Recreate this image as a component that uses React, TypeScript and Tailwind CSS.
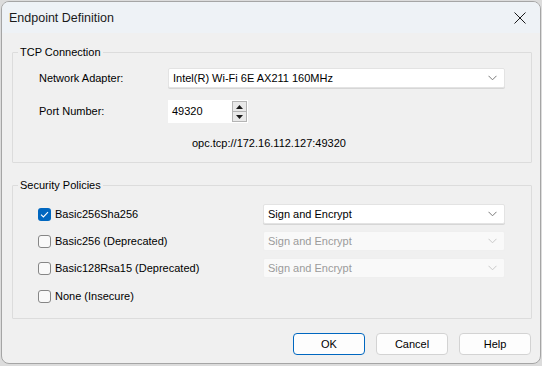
import React from "react";

const font = { fontFamily: '"Liberation Sans", Arial, sans-serif' };

// small chevron used by the combo boxes
function Chevron({ disabled }: { disabled?: boolean }) {
  return (
    <svg width="9" height="6" viewBox="0 0 9 6" className="shrink-0">
      <path d="M0.5 0.8 L4.5 4.8 L8.5 0.8" fill="none" stroke={disabled ? "#c9c9c9" : "#7a7a7a"} strokeWidth="1" />
    </svg>
  );
}

function Combo({ value, width, disabled }: { value: string; width: string; disabled?: boolean }) {
  return (
    <div
      className={`${width} h-[20px] flex items-center justify-between pl-[4px] pr-[7px] rounded-[2px] border ${
        disabled ? "bg-[#f9f9f9] border-[#efefef] text-[#9b9b9b]" : "bg-white border-[#e3e3e3] text-black shadow-[0_1px_0_#d6d6d6]"
      }`}
    >
      <span>{value}</span>
      <Chevron disabled={disabled} />
    </div>
  );
}

function Check({ checked, label }: { checked?: boolean; label: string }) {
  return (
    <div className="flex items-center gap-[4px]">
      {checked ? (
        <div className="w-[13px] h-[13px] rounded-[3px] bg-[#0067c0] flex items-center justify-center">
          <svg width="9" height="7" viewBox="0 0 9 7">
            <path d="M1 3.6 L3.4 6 L8 1.2" fill="none" stroke="#ffffff" strokeWidth="1.1" />
          </svg>
        </div>
      ) : (
        <div className="w-[13px] h-[13px] rounded-[3px] border border-[#868686] bg-[#f9f9f9]" />
      )}
      <span>{label}</span>
    </div>
  );
}

function Button({ label, primary }: { label: string; primary?: boolean }) {
  return (
    <button
      className={`w-[72px] h-[22px] rounded-[4px] bg-[#fdfdfd] text-black ${
        primary ? "border border-[#0067c0]" : "border border-[#d3d3d3]"
      }`}
    >
      {label}
    </button>
  );
}

export default function App() {
  return (
    <div className="w-[542px] h-[366px] bg-[#dcdcdc] pt-px pl-px text-[11px] text-black" style={font}>
      <div className="w-[540px] h-[363px] rounded-[8px] border border-[#a5a5a5] bg-[#f0f0f0] overflow-hidden flex flex-col">
        {/* title bar */}
        <div className="h-[31px] bg-[#eef2f6] flex items-center justify-between pl-[7px] pr-[14px] shrink-0">
          <span className="text-[12.5px] text-[#1a1a1a] pt-[2px]">Endpoint Definition</span>
          <svg width="12" height="12" viewBox="0 0 12 12">
            <path d="M0.5 0.5 L11.5 11.5 M11.5 0.5 L0.5 11.5" stroke="#1a1a1a" strokeWidth="1" />
          </svg>
        </div>

        {/* TCP Connection */}
        <fieldset className="mt-[12px] ml-[10px] w-[520px] h-[118px] border border-[#dcdcdc] rounded-[1px]">
          <legend className="ml-[5px] px-[2px] leading-[14px]">TCP Connection</legend>
          <div className="pt-[9px] pl-[26px] flex flex-col">
            <div className="flex items-center h-[20px]">
              <span className="w-[129px]">Network Adapter:</span>
              <Combo value="Intel(R) Wi-Fi 6E AX211 160MHz" width="w-[337px]" />
            </div>
            <div className="flex items-center h-[23px] mt-[12px]">
              <span className="w-[129px]">Port Number:</span>
              <div className="w-[63px] h-[23px] bg-white flex items-center pl-[4px]">49320</div>
              <div className="w-[17px] h-[23px] flex flex-col bg-white p-px">
                <div className="flex-1 flex items-center justify-center bg-[#e9e9e9] border border-[#b4b4b4] border-b-0">
                  <svg width="7" height="4" viewBox="0 0 7 4"><path d="M0 4 L3.5 0 L7 4 Z" fill="#1a1a1a" /></svg>
                </div>
                <div className="flex-1 flex items-center justify-center bg-[#e9e9e9] border border-[#b4b4b4]">
                  <svg width="7" height="4" viewBox="0 0 7 4"><path d="M0 0 L3.5 4 L7 0 Z" fill="#1a1a1a" /></svg>
                </div>
              </div>
            </div>
            <div className="mt-[13px] pl-[153px] leading-[14px]">opc.tcp://172.16.112.127:49320</div>
          </div>
        </fieldset>

        {/* Security Policies */}
        <fieldset className="mt-[15px] ml-[10px] w-[520px] h-[141px] border border-[#dcdcdc] rounded-[1px]">
          <legend className="ml-[5px] px-[2px] leading-[14px]">Security Policies</legend>
          <div className="pt-[12px] pl-[25px] pr-[26px] flex flex-col gap-[7px]">
            <div className="flex items-center justify-between h-[20px]">
              <Check checked label="Basic256Sha256" />
              <Combo value="Sign and Encrypt" width="w-[242px]" />
            </div>
            <div className="flex items-center justify-between h-[20px]">
              <Check label="Basic256 (Deprecated)" />
              <Combo value="Sign and Encrypt" width="w-[242px]" disabled />
            </div>
            <div className="flex items-center justify-between h-[20px]">
              <Check label="Basic128Rsa15 (Deprecated)" />
              <Combo value="Sign and Encrypt" width="w-[242px]" disabled />
            </div>
            <div className="flex items-center h-[20px] mt-[1px]">
              <Check label="None (Insecure)" />
            </div>
          </div>
        </fieldset>

        {/* buttons */}
        <div className="flex justify-end gap-[11px] pr-[9px] mt-[14px]">
          <Button label="OK" primary />
          <Button label="Cancel" />
          <Button label="Help" />
        </div>
      </div>
    </div>
  );
}
